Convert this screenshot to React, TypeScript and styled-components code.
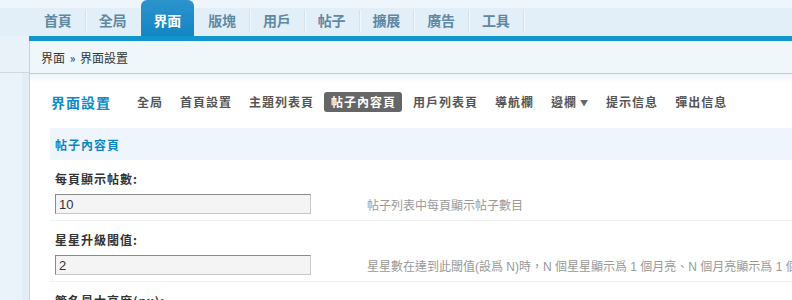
import React from "react";
import styled, { createGlobalStyle } from "styled-components";

const Global = createGlobalStyle`
  html, body { margin: 0; padding: 0; }
  body {
    width: 792px;
    height: 300px;
    overflow: hidden;
    background: #fff;
    font-family: "Liberation Sans", "Noto Sans CJK TC", sans-serif;
    font-size: 12px;
    color: #333;
  }
`;

const Page = styled.div`
  width: 792px;
  height: 300px;
  overflow: hidden;
  display: grid;
  grid-template-columns: 29px 1fr;
  grid-template-rows: 36px 1fr;
`;

const Header = styled.div`
  grid-column: 1 / 3;
  display: flex;
  align-items: stretch;
  padding-left: 31px;
  background: linear-gradient(#eef5fb 0 8px, #e3eff8 8px);
`;

const Tab = styled.div<{ $active?: boolean }>`
  width: 53.75px;
  box-sizing: border-box;
  display: flex;
  align-items: center;
  justify-content: center;
  padding-top: 4px;
  font-family: "Noto Sans CJK TC", sans-serif;
  font-size: 14px;
  font-weight: 700;
  color: ${(p) => (p.$active ? "#fff" : "#5f88a3")};
  background: ${(p) => (p.$active ? "linear-gradient(#2c93cc, #1286c4)" : "transparent")};
  border-radius: ${(p) => (p.$active ? "6px 6px 0 0" : "0")};
`;

const TabSep = styled.div<{ $hidden?: boolean }>`
  width: 1px;
  align-self: center;
  height: 22px;
  margin-top: 6px;
  background: ${(p) => (p.$hidden ? "transparent" : "#d3e3ee")};
  box-shadow: ${(p) => (p.$hidden ? "none" : "1px 0 0 #f1f7fb")};
`;

const Sidebar = styled.div`
  display: flex;
  flex-direction: column;
  background: #e6f0f8;
`;

const SidebarTop = styled.div`
  height: 36px;
  background: #eaf2f9;
  border-bottom: 1px solid #cdd8e0;
`;

const SidebarBody = styled.div`
  flex: 1;
  background: linear-gradient(90deg, #ebf3fa 0 22px, #e2edf6 22px);
`;

const Main = styled.div`
  display: flex;
  flex-direction: column;
  border-left: 1px solid #bfd3e2;
  min-width: 0;
`;

const BlueBar = styled.div`
  height: 5px;
  margin-left: -1px;
  background: #1096cd;
`;

const Breadcrumb = styled.div`
  height: 31px;
  display: flex;
  align-items: center;
  padding-left: 11px;
  background: #f0f7fb;
  border-top: 1px solid #fafdff;
  border-bottom: 1px solid #c3cbd0;
  font-family: "Noto Sans CJK TC", sans-serif;
  font-size: 12px;
  color: #333;
  word-spacing: 2px;
`;

const Content = styled.div`
  flex: 1;
  padding: 18px 0 0 20px;
  background: linear-gradient(#eef4f8, #fff 9px);
`;

const TitleRow = styled.div`
  display: flex;
  align-items: center;
  height: 20px;
  margin-left: 1px;
  white-space: nowrap;
`;

const Title = styled.div`
  font-family: "Noto Sans CJK TC", sans-serif;
  font-size: 14px;
  letter-spacing: 1px;
  font-weight: 700;
  color: #0b8bc8;
  margin-right: 19px;
`;

const SubNav = styled.div`
  display: flex;
  align-items: center;
  gap: 4px;
`;

const SubItem = styled.div<{ $active?: boolean }>`
  height: 20px;
  line-height: 20px;
  padding: 0 6px 0 7px;
  border-radius: 3px;
  font-family: "Noto Sans CJK TC", sans-serif;
  font-size: 12px;
  letter-spacing: 1px;
  font-weight: 700;
  color: ${(p) => (p.$active ? "#fff" : "#555")};
  background: ${(p) => (p.$active ? "#666" : "transparent")};
`;

const Caret = styled.span`
  font-size: 8px;
  margin-left: 3px;
  color: #666;
  vertical-align: 1px;
`;

const SectionHead = styled.div`
  margin-top: 16px;
  height: 32px;
  display: flex;
  align-items: center;
  padding-left: 5px;
  background: #eef5fc;
  font-family: "Noto Sans CJK TC", sans-serif;
  font-size: 12px;
  letter-spacing: 1px;
  font-weight: 700;
  color: #0d85c0;
`;

const Row = styled.div`
  padding: 10px 0 6px 5px;
  border-bottom: 1px solid #f0f0f0;
  margin-top: 1px;
`;

const Label = styled.div`
  height: 16px;
  line-height: 16px;
  font-family: "Noto Sans CJK TC", sans-serif;
  font-size: 12px;
  letter-spacing: 1px;
  font-weight: 700;
  color: #333;
`;

const Field = styled.div`
  margin-top: 7px;
  display: grid;
  grid-template-columns: 312px auto;
  align-items: center;
`;

const Input = styled.input`
  box-sizing: border-box;
  width: 256px;
  height: 20px;
  padding: 0 3px;
  margin: 0;
  background: #f4f4f4;
  border: 1px solid #c8c8c8;
  border-top-color: #8a8a8a;
  border-left-color: #8a8a8a;
  font-family: "Liberation Sans", sans-serif;
  font-size: 13px;
  color: #333;
  outline: none;
`;

const Desc = styled.div`
  white-space: nowrap;
  font-family: "Liberation Sans", "Noto Sans CJK TC", sans-serif;
  font-size: 12px;
  color: #999;
`;

const tabs = ["首頁", "全局", "界面", "版塊", "用戶", "帖子", "擴展", "廣告", "工具"];
const subs = ["全局", "首頁設置", "主題列表頁", "帖子內容頁", "用戶列表頁", "導航欄", "邊欄", "提示信息", "彈出信息"];

export default function App() {
  const activeTab = 2;
  return (
    <>
      <Global />
      <Page>
        <Header>
          {tabs.map((t, i) => (
            <React.Fragment key={t}>
              <Tab $active={i === activeTab}>{t}</Tab>
              <TabSep $hidden={i === activeTab - 1 || i === activeTab} />
            </React.Fragment>
          ))}
        </Header>
        <Sidebar>
          <SidebarTop />
          <SidebarBody />
        </Sidebar>
        <Main>
          <BlueBar />
          <Breadcrumb>界面 » 界面設置</Breadcrumb>
          <Content>
            <TitleRow>
              <Title>界面設置</Title>
              <SubNav>
                {subs.map((s) => (
                  <SubItem key={s} $active={s === "帖子內容頁"}>
                    {s}
                    {s === "邊欄" && <Caret>▼</Caret>}
                  </SubItem>
                ))}
              </SubNav>
            </TitleRow>
            <SectionHead>帖子內容頁</SectionHead>
            <Row>
              <Label>每頁顯示帖數:</Label>
              <Field>
                <Input defaultValue="10" />
                <Desc>帖子列表中每頁顯示帖子數目</Desc>
              </Field>
            </Row>
            <Row>
              <Label>星星升級閾值:</Label>
              <Field>
                <Input defaultValue="2" />
                <Desc>星星數在達到此閾值(設爲 N)時，N 個星星顯示爲 1 個月亮、N 個月亮顯示爲 1 個太陽。</Desc>
              </Field>
            </Row>
            <Row>
              <Label>簽名最大高度(px):</Label>
            </Row>
          </Content>
        </Main>
      </Page>
    </>
  );
}
